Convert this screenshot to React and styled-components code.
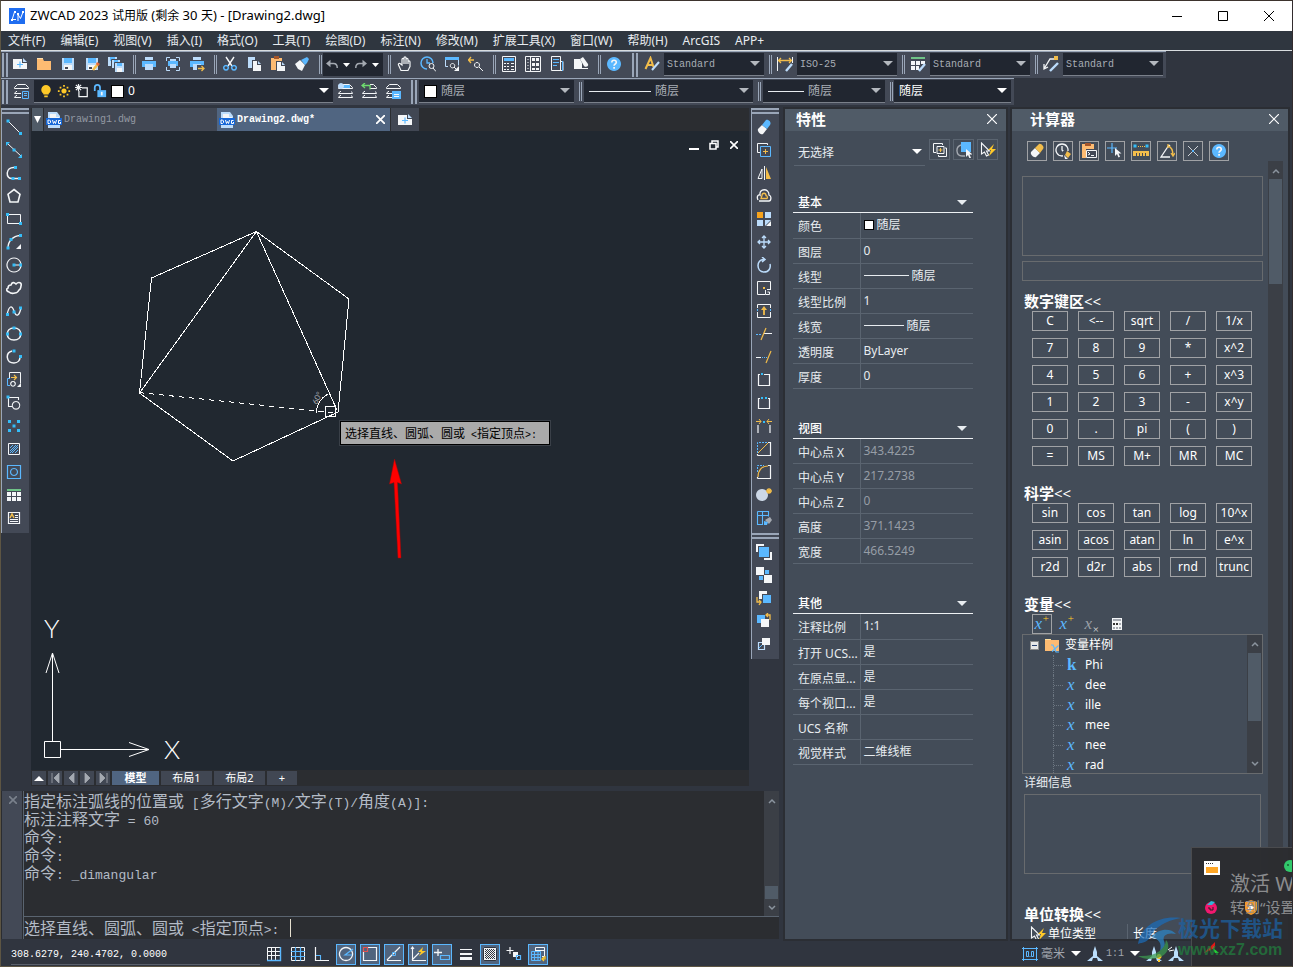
import React from 'react';
import styled, { createGlobalStyle, css } from 'styled-components';

const C = {
  bar: '#434956', frame: '#30353f', dark: '#212630', strip: '#2b2d31', canvas: '#212830',
  panel: '#434c58', head: '#505b67', grip: '#9aa6b8', line: '#5a6470', text: '#e8ecf0',
  white: '#f4f6f8', blue: '#5bb8ff', cyan: '#35bdf8', pale: '#bcdcfb', gold: '#f2bd4b', orange: '#fdbb72', grey: '#a4a9b1',
};
const ui = '"Noto Sans", "Noto Sans CJK SC", sans-serif';
const mono = '"Liberation Mono", "Noto Sans CJK SC", monospace';

const Global = createGlobalStyle`
  *, *::before, *::after { box-sizing: border-box; }
  body { margin: 0; background: ${C.frame}; font: 12px/18px ${ui}; color: ${C.text}; }
  button, input, select, textarea { font: inherit; color: inherit; margin: 0; padding: 0; border: 0; border-radius: 0; background: none; outline: none; }
  option { background: ${C.dark}; color: ${C.text}; }
  svg { display: block; flex: none; }
`;

/* ---------- icons: [colour, 'f'ill or stroke width, path] on a 16 x 16 grid ---------- */
const W = C.white, B = C.blue, Q = C.cyan, P = C.pale, G = C.gold, O = C.orange, K = C.bar, N = C.grey;
const dot = (x, y) => `M${x - 1.5} ${y - 1.5}h3v3h-3z`;
const printer = [[B, 'f', 'M1 5h14v6H1z'], [P, 'f', 'M4 1h8v3H4zM4 8h8v6H4z']];
const floppy = [[P, 'f', 'M2 2h12v12H2z'], [B, 'f', 'M4 2h8v5H4z'], [W, 'f', 'M4 9h8v5H4z'], [K, 'f', 'M5 11h3v2H5z']];
const layers = [[W, 1, 'M4.5 1.5h8l3 3v1h-14v-1zM4 8.5h-1l-1.500 2h14l-1-2M4 12.500h-1l-1.500 2h14l-1-2']];
const magnifier = [[W, 1, 'M11.500 7.500a2.500 2.500 0 1 0 0 5a2.500 2.500 0 1 0 0-5M13 12l3 3.500']];
const cursor = (x, y) => `M${x} ${y}v8l2-2 1.500 3.500 1.500-.7-1.500-3.300h3z`;

const icons = {
  zw: [['#1f6df0', 'f', 'M0 0h16v16H0z'], ['#fff', 1, 'M3 12l2.500-8M4 11.500h3M9 13V6.500l2.500 4L14 4'], ['#fff', 'f', 'M5 3h2v2H5zM2 11h2v2H2zM13 3h2v2h-2zM8 5h2v2H8z']],
  newFile: [[W, 'f', 'M1 3h9v4h5v6H1z'], [P, 'f', 'M11 2l4 4h-4z'], [B, 1.2, 'M8 5.500v6M5 8.500h6']],
  open: [['#ffe0b0', 'f', 'M1 2h6v2H1z'], [O, 'f', 'M1 3h6l1 2h7v9H1z']],
  save: floppy,
  saveAs: [...floppy, [G, 2.6, 'M9 14l5-6'], ['#e86a3a', 'f', 'M13 6l3 2-2 2-2-2z']],
  saveAll: [[P, 'f', 'M0 1h9v9H0z'], [B, 'f', 'M2 1h5v4H2z'], [K, 1, 'M3.500 3.500h9v9h-9z'], [P, 'f', 'M4 4h8v8H4z'], [B, 'f', 'M6 4h4v4H6z'], [K, 1, 'M6.500 6.500h9v9h-9z'], [P, 'f', 'M7 7h9v9H7z'], [B, 'f', 'M9 7h5v3H9z'], [W, 'f', 'M9 12h5v4H9z']],
  print: printer,
  preview: [[P, 1, 'M1.500 5V1.500H5M11 1.500h3.500V5M14.500 11v3.500H11M5 14.500H1.500V11'], [B, 'f', 'M3 5h10v5H3z'], [P, 'f', 'M5 3h6v2H5zM5 8h6v4H5z']],
  publish: [...printer, [K, 'f', 'M8 9h8v7H8z'], [G, 1.3, 'M9 12.500h6M12.500 10l2.500 2.500-2.500 2.500']],
  cut: [[W, 1.4, 'M4 1l6 9M12 1L6 10'], [B, 1.5, 'M4 9.500a2.300 2.300 0 1 0 .01 0M12 9.500a2.300 2.300 0 1 0 .01 0']],
  copy: [[P, 'f', 'M2 1h7v3H6v8H2z'], [W, 'f', 'M7 5h4v4h4v6H7z'], [P, 'f', 'M12 5l3 3h-3z']],
  paste: [[O, 'f', 'M1 2h11v12H1z'], ['#a5562a', 'f', 'M4 0h5v3H4z'], [K, 'f', 'M6 5h9v11H6z'], [W, 'f', 'M7 6h4v4h4v5H7z'], [P, 'f', 'M12 6l3 3h-3z']],
  brush: [[W, 'f', 'M1 8l5-4 5 5-3 6-4-2z'], [B, 'f', 'M7 4l2-1 4-2 2 2-2 4-2 2z']],
  undo: [[N, 2, 'M4 6h6c3 0 5 2 5 6'], [N, 'f', 'M0 6l6-5v10z']],
  redo: [[N, 2, 'M12 6H6c-3 0-5 2-5 6'], [N, 'f', 'M16 6l-6-5v10z']],
  hand: [[W, 1.2, 'M5 14.500h7l2-4V6c0-1.500-2-1.500-2 0V3.500c0-1.500-2-1.500-2 0V2c0-1.500-2-1.500-2 0v1.500c0-1.500-2-1.500-2 0V9L4 7.500C3 7 2 8 2.500 9z M8 3v5M10 3v5M12 5v3']],
  zoomRt: [[B, 1.5, 'M7 1a6 6 0 1 0 0 12M7 1a6 6 0 0 1 6 6'], [B, 1.3, 'M7 3v4h3'], ...magnifier],
  zoomWin: [[P, 1, 'M4 10.500H1.500v-9h13v8'], [B, 'f', 'M1 1h14v3H1z'], [W, 1, 'M8.500 7.500a2.200 2.200 0 1 0 .01 0M10 11l2 2'], [W, 'f', 'M15 10v5h-5z']],
  zoomPrev: [[G, 1.3, 'M0 4h6M3 1L.5 4 3 7'], [W, 1, 'M9 6.500a2.500 2.500 0 1 0 .01 0M11 11l4 4']],
  props: [[W, 1, 'M1.500.5h13v15h-13z'], [B, 'f', 'M3 2h10v3H3z'], [W, 1, 'M3 7.500h2m1 0h2m2 0h3M3 10.500h2m1 0h2m2 0h3M3 13.500h2m1 0h2m2 0h3']],
  design: [[W, 1, 'M.5.5h15v15h-15zM5.500.5v15M3 3v1m0 2v1m0 2v1m0 2v1'], [W, 'f', 'M7 2h3v3H7zM11 2h3v3h-3zM7 7h3v3H7zM11 7h3v3h-3zM7 12h3v2H7zM11 12h3v2h-3z']],
  sheet: [[W, 1, 'M2.500.5h9v14h-9zM11 5.500h3v9h-3'], [B, 1, 'M4 3.500h6M4 6.500h6M4 9.500h4M13.500 5v10']],
  clean: [[W, 'f', 'M1 3h6l2 4v6H1z'], [W, 'f', 'M7 3l3-2 5 7c1 2-2 4-4 2z'], [W, 'f', 'M1 12h14v1H1z']],
  help: [[B, 'f', 'M8 1a7 7 0 1 0 .01 0'], [W, 1.6, 'M5.800 6.500c0-3 4.500-3 4.500 0 0 1.500-2.300 1.500-2.300 3.200'], [W, 'f', 'M7.200 11h1.800v1.800H7.200z']],
  textStyle: [[G, 2, 'M1.500 13L6.500 2l3 9M3 9h6'], [P, 2, 'M8 14l7-8']],
  dimStyle: [[W, 1, 'M.5 1v14M15.500 1v6'], [G, 1.3, 'M2 4.500h12M4 2L1.500 4.500 4 7M12 2l2.500 2.500L12 7'], [P, 2.4, 'M9 15l6-7']],
  tableStyle: [['#6fc387', 'f', 'M1 1h14v2H1z'], [W, 'f', 'M1 5h4v4H1zM6 5h4v4H6zM11 5h4v3h-4zM1 10h4v4H1zM6 10h3v4H6z'], [P, 2.4, 'M9 15l6-7']],
  leader: [[W, 1.3, 'M12 3H7L1.500 12M1 8v5l4-2'], [G, 'f', 'M11 0h4v4h-4z'], [P, 2.4, 'M7 15l8-8']],
  layerProps: [...layers, [K, 'f', 'M8 7h8v9H8z'], [B, 1, 'M9.500 8.500h6v7h-6zM11 10.500h3M11 12.500h3']],
  layerPrev: [['#5bb8ff', 'f', 'M3 2h10v3H3z'], ...layers, [P, 'f', 'M4 0a3 3 0 1 0 .01 0']],
  layerBack: [...layers, [K, 'f', 'M0 0h9v6H0z'], ['#6fdc6f', 1.3, 'M1 2.500h8v4M4 0L1 2.500 4 5']],
  layerState: [...layers, [K, 'f', 'M7 7h9v9H7z'], [B, 'f', 'M7 8h9v8H7z'], [W, 1, 'M9 11.500h5M9 13.500h5']],
  bulb: [['#ffc928', 'f', 'M8 1a5.500 5.500 0 0 0-3 10v1h6v-1A5.500 5.500 0 0 0 8 1M6 13h4v2H6z']],
  sun: [['#ffc928', 'f', 'M8 5a3 3 0 1 0 .01 0M7 1h2v2H7zM7 13h2v2H7zM1 7h2v2H1zM13 7h2v2h-2zM3 3h2v2H3zM11 3h2v2h-2zM3 11h2v2H3zM11 11h2v2h-2z']],
  vpFreeze: [[W, 1.4, 'M8 4.500h6v10H4.500V8M0 4h8M4 0v8M1 1l6 6M7 1L1 7']],
  unlock: [[B, 2, 'M2 8V4c0-4 6-4 6 0v3'], [B, 'f', 'M5 7h10v8H5z'], [W, 'f', 'M9 9h2v4H9z']],
  dwg: [[P, 'f', 'M2 0h9l3 4v12H2z'], [W, 'f', 'M4 2h6v3h3v3H4z'], ['#1768d8', 'f', 'M0 6h16v7H0z'], ['#fff', 1, 'M2 8v3.500h1.500l1-1V9l-1-1zM6.500 8l1 3.500 1-2 1 2 1-3.500M14.500 8.500h-2v3h2v-1.500']],
  line: [[W, 1, 'M2 2l12 12'], [Q, 'f', dot(2, 2) + dot(14.5, 14.5)]],
  xline: [[W, 1, 'M2 2l13 12'], [Q, 'f', dot(8, 8) + 'M0 0h4L0 4zM16 16h-4l4-4z']],
  polyline: [[W, 1.5, 'M9 2.500C-1 1-1 15 7 13.500h6'], [Q, 'f', dot(9.5, 2.5) + dot(7, 13.5) + dot(13.5, 13.5)]],
  polygon: [[W, 1.6, 'M8 1.500l6 4.700-2 7.800H4L2 6.200z']],
  rect: [[W, 1, 'M1.500 3.500h13v9h-13z'], [Q, 'f', dot(1.5, 3.5) + dot(14.5, 12.5)]],
  arc: [[W, 1.4, 'M2 14C2 7 7 2 14 1.500'], [Q, 'f', dot(2, 14) + dot(5, 5.5) + dot(14.5, 1.5)], [W, 'f', 'M15 10v5h-5z']],
  circle: [[W, 1.2, 'M8 1a7 7 0 1 0 .01 0M8 8h6'], [Q, 'f', dot(8, 8) + dot(14.5, 8)]],
  cloud: [[W, 1.6, 'M5 5c1-3 3-3 5-1 3-3 6-1 5 2-.5 2 0 3-2 4-1 2-2 3-4 3-4 1-5 0-6-1-3-1-3-3-1-4 0-2 1-3 3-3z']],
  spline: [[W, 1.3, 'M1 12C3 2 6 2 8 8s5 6 7-3'], [Q, 'f', dot(1.5, 11.5) + dot(8, 9) + dot(14.5, 5)]],
  ellipse: [[W, 1.5, 'M8 2C-1 2-1 14 8 14S17 2 8 2'], [Q, 'f', dot(8, 2) + dot(1.5, 8) + dot(14.5, 8)]],
  ellArc: [[W, 1.5, 'M6 2C-1 4 0 14 8 14c4 0 6-3 6-6'], [Q, 'f', dot(8, 2) + dot(14.5, 7.5)]],
  insert: [[W, 1, 'M3.500 6V.5h11v11'], [B, 1, 'M4 6.500H1.500v7H4'], [G, 1.2, 'M5 5.500h5M8 3l2.500 2.500L8 8'], [W, 1.2, 'M7 9.500a2.300 2.300 0 1 0 .01 0'], [W, 'f', 'M15 11v4h-4z']],
  block: [[W, 1.1, 'M6 11.500H2.500v-9h10V5M10 6.500a3.800 3.800 0 1 0 .01 0'], [Q, 'f', dot(2, 2)]],
  points: [[Q, 'f', dot(3.5, 3.5) + dot(12.5, 3.5) + dot(8, 8) + dot(3.5, 12.5) + dot(12.5, 12.5)]],
  hatch: [[W, 1, 'M2.500 2.500h11v11h-11z'], [B, 1, 'M4 7l3-3M4 10l6-6M4 12l8-8M6 12l6-6M9 12l3-3']],
  region: [[B, 1.2, 'M1.500 1.500h13v13h-13zM8 4.500a3.500 3.500 0 1 0 .01 0']],
  table: [['#6fc387', 'f', 'M1 2h14v2H1z'], [W, 'f', 'M1 5h4v4H1zM6 5h4v4H6zM11 5h4v4h-4zM1 10h4v4H1zM6 10h4v4H6zM11 10h4v4h-4z']],
  mtext: [[W, 1.2, 'M2.500 2.500h11v11h-11z'], [G, 1.5, 'M4 8l2-4 2 4'], [W, 1, 'M9 5.500h3M9 7.500h3M4 9.500h8M4 11.500h8']],
  eraser: [[W, 'f', 'M2 10l4-4 5 4-4 5c-2 1-6-2-5-5z'], [B, 'f', 'M6 6l4-5c2-1 6 2 4 5l-3 4z']],
  eraserGold: [[W, 'f', 'M2 9l4-4 5 5-4 4c-2 1-6-2-5-5z'], [G, 'f', 'M6 5l4-4c2-1 6 3 4 5l-3 4z']],
  copyObj: [[W, 1, 'M4 10.500H1.500v-9h10V3'], [B, 1, 'M4.500 4.500h10v10h-10z'], [G, 1, 'M9.500 7v5M7 9.500h5']],
  mirror: [[W, 1, 'M8.500 1v14M6 4v9.500H2z'], [G, 'f', 'M10 2l5 12h-5z']],
  offset: [[W, 1.3, 'M2 12c-2-4 1-6 2-5-1-7 9-7 9 0 3 1 2 6 0 6H3'], [G, 1.3, 'M5 10.500h6c1-1 0-3-1-3 0-3-4-3-4 0z']],
  array: [['#f7a31c', 'f', 'M1 1h6v6H1z'], [P, 'f', 'M9 1h6v6H9zM1 9h6v6H1z'], [P, 'f', 'M9 9h6L9 15z'], [W, 'f', 'M15 10v5h-5z']],
  move: [[P, 1.3, 'M8 2v12M2 8h12M6 4l2-2 2 2M6 12l2 2 2-2M4 6L2 8l2 2M12 6l2 2-2 2']],
  rotate: [[P, 1.5, 'M8 2.500C0 2 0 15 8 15c5 0 7-4 6-8M6 0l3 2.500L6 5']],
  scale: [[W, 1, 'M9 14.500H1.500v-13h13V9M9.500 10v4.500h4V12h-2M11 9.500h4'], [G, 'f', 'M7 7h2v2H7z']],
  stretch: [[W, 1, 'M1.500 5V1.500h13V5M1.500 9v5.500h13V9'], [G, 1.8, 'M8 12V5'], [G, 'f', 'M8 3l3 4H5z'], [B, 'f', 'M1 6h1v2H1zM14 6h1v2h-1z']],
  trim: [[B, 1, 'M0 8.500h2m1 0h2'], [W, 1, 'M8 7.500h8'], [G, 1.2, 'M5 14l5-12']],
  extend: [[W, 1, 'M0 8.500h5'], [B, 1, 'M6 8.500h1m1 0h1m1 0h1'], [G, 1.2, 'M10 14l5-12']],
  breakPt: [[W, 1.2, 'M4 2.500H2.500v11h11v-11H8'], [Q, 'f', 'M5 1h2v2H5z']],
  breakTwo: [[W, 1.2, 'M4 3.500H2.500v10h11v-10H12'], [Q, 'f', 'M5 2h2v2H5zM9 2h2v2H9z']],
  join: [[W, 1.2, 'M2 15V7M14 15V7'], [G, 1, 'M0 3.500h5M3 1l2 2.500L3 6M16 3.500h-5M13 1l-2 2.500L13 6'], [Q, 'f', 'M7 3h2v2H7z']],
  chamfer: [[W, 1.2, 'M1.500 14.500h13v-13H12M1.500 14.500V13'], [B, 1, 'M1.500 12V1.500H12', '2 1'], [G, 1, 'M2 12L12 2']],
  fillet: [[W, 1.2, 'M1.500 14.500h13v-13H12M1.500 14.500V13'], [B, 1, 'M1.500 8V1.500H8', '2 1'], [G, 1.2, 'M2 13C2 6 6 2 12 2']],
  explode: [['#ccd7e6', 'f', 'M6 2a6 6 0 1 0 .01 0'], [G, 1.3, 'M13 1v6M10 4h6M11 2l4 4M15 2l-4 4']],
  edit: [[B, 1.1, 'M1.500 1.500h11v5M1.500 1.500v13h5v-13M1 5.500h11'], [N, 'f', 'M9 10l5-3 2 3-3 4z'], [B, 'f', 'M8 11l4 1-1 3H8z']],
  front: [[W, 'f', 'M0 0h8v2H2v6H0zM16 8v8H8v-2h6V8z'], [B, 'f', 'M3 3h10v10H3z']],
  back: [[W, 'f', 'M0 0h8v8H0zM8 8h8v8H8z'], [B, 'f', 'M9 3h4v4H9zM3 9h4v4H3z']],
  above: [[W, 'f', 'M3 1h8v3H6v5H3z'], [B, 'f', 'M7 5h8v8H7z'], [G, 1.3, 'M1 7v5h4M3 10l2 2-2 3']],
  below: [[B, 'f', 'M1 2h8v8H1z'], [W, 'f', 'M5 6h8v8H5z'], [G, 1.3, 'M14 7V2h-4M12 0l-2 2 2 2']],
  hatchBack: [[P, 1.2, 'M2.500 6.500h6v7h-6z'], [B, 1, 'M3 12l5-5'], [W, 'f', 'M6 2h8v7H6z']],
  pickAdd: [[W, 1, 'M4 10.500H1.500v-9h9V3M5 4.500h7v7H5zM13 6h1.500v8.500h-8V13'], [G, 1, 'M8.500 6v4M6.500 8h4']],
  select: [[N, 1.4, 'M5 3c-6 2-5 11 1 11h3'], [B, 'f', 'M5 0h10v10H5z'], [W, 'f', cursor(10, 7)]],
  quick: [[W, 1.1, 'M1.500 1v11l3-2 2 4 2-1-2-4h3z'], ['#ffc928', 'f', 'M14 2L8 8h3l-2 6 7-7h-4z']],
  history: [[W, 1.3, 'M7 1a6 6 0 1 0 .01 0M7 3v4l2 2'], [K, 'f', 'M8 8h8v8H8z'], [W, 'f', 'M9 12l4 4-3 0z'], [G, 'f', 'M12 8l4 3-3 4-3-3z']],
  pasteCmd: [[O, 'f', 'M1 1h12v14H1z'], ['#a5562a', 'f', 'M4 0h6v3H4z'], [K, 'f', 'M5 6h11v9H5z'], [W, 1, 'M5.500 7.500h10v7h-10zM7 9l2 2-2 1M10 12.500h3']],
  getPoint: [[B, 1.2, 'M5 0v10M0 5h10'], [W, 'f', cursor(8, 5)]],
  distance: [[Q, 'f', dot(2, 3) + dot(14, 3)], [G, 1, 'M5 3.500h1m1 0h1m1 0h1m1 0h1'], [G, 'f', 'M0 8h16v5H0z'], [K, 1, 'M3.500 10v3M6.500 10v3M9.500 10v3M12.500 10v3']],
  angle: [[W, 1.3, 'M10 2L2 14h9M10 2l1 1'], [G, 1.3, 'M9 3c4 1 5 4 5 10M12 10l2 3 2-3M9 1v4']],
  intersect: [[W, .8, 'M3 3l10 10M13 3L3 13'], [B, 'f', 'M7 7h2v2H7z']],
  calcVar: [[W, 'f', 'M3 2h10v12H3z'], [N, 'f', 'M4 3h8v2H4z'], ['#333', 'f', 'M4 7h2v2H4zM7 7h2v2H7z'], [N, 'f', 'M10 7h2v2h-2zM4 11h2v2H4zM7 11h2v2H7zM10 11h2v2h-2z']],
  folder: [['#ffe0a0', 'f', 'M1 2h6v2H1z'], [O, 'f', 'M1 3h14v11H1z'], [B, 1.2, 'M7 8h2l3 7h3M14.500 8.500L8 14.500']],
  gridA: [[W, 1, 'M1.500 1.500h13v13h-13zM5.500 1v13M9.500 1v13M1 5.500h13M1 9.500h13'], [B, 1.4, 'M14.500 1v13.500H1']],
  gridB: [[W, 1, 'M1.500 1.500h13v13h-13z'], [B, 1.2, 'M5.500 1v14M10.500 1v14M1 5.500h14M1 10.500h14']],
  ortho: [[W, 1.2, 'M1.500 1v13.500H15'], [B, 1.1, 'M2 9.500h4.500V14']],
  polar: [[W, 1.3, 'M8 1.500a6.500 6.500 0 1 0 .01 0'], [B, 1.2, 'M15 3L7 9h7']],
  osnap: [[W, 1.2, 'M6 1.500h8.500v13h-13V6'], ['#e35353', 1.2, 'M1.500 1.500h4v4h-4z']],
  otrack: [[W, 1.2, 'M1 14.500h14M1 14L14 1'], [B, 1, 'M6.500 6.500h3v3h-3z']],
  ducs: [[W, 1.1, 'M2.500 1v13.500H16M1 3l1.500-2L4 3M2 14L9 7'], ['#ffc928', 'f', 'M13 1L8 6h3l-2 4 7-5h-4z']],
  dyn: [[W, 1.3, 'M4 3v7M0 6.500h8'], [B, 1.2, 'M6.500 9.500h9v4h-9z']],
  lwt: [[W, 'f', 'M2 3h12v1H2zM2 7h12v2H2zM2 11h12v3H2z']],
  transp: [['#f0f2f4', 'f', 'M2 2h12v12H2z'], ['#30353f', 1, 'M3 3.500h10M3 5.500h10M3 7.500h10M3 9.500h10M3 11.500h10M4 4.500h9M4 6.500h9M4 8.500h9M4 10.500h9M4 12.500h9', '1 1'], ['#30353f', 1, 'M1.500 2.500l1-1h11l1 1v11l-1 1h-11l-1-1z']],
  cycle: [[W, 1.2, 'M4 1v7M.5 4.500h7'], [W, 'f', 'M7 6h5v5H7z'], [B, 1.2, 'M10.500 9.500h4v4h-4z']],
  annot: [[W, 1, 'M5.500 5V1.500h9v9H12M5 4.500h9'], [B, 1, 'M1.500 5.500h9v9h-9zM4.500 5v10M8 5v10M1 8.500h10M1 11.500h10'], ['#ffc928', 1.2, 'M15 10v3h-3M14 11l-2 2 2 2']],
  units: [[B, 1, 'M1.500 1v14M0 2.500h16M14.500 1v14M0 13.500h16'], [B, 1, 'M4.500 5.500v5h2v-5zM9.500 5.500v5h2v-5z'], [B, 'f', 'M7.500 10h1v1h-1z']],
  scaleA: [['#b9ddfb', 'f', 'M8 0l2 6v4l6 5H11l-1-3H6l-1 3H0l6-5V6z']],
};
icons.scaleB = [...icons.scaleA, ['#ffc928', 'f', 'M13 8a2.500 2.500 0 1 0 .01 0M12 14h2v2h-2z']];
icons.scaleC = [...icons.scaleA, [W, 1, 'M0 4l4-3M1 5l5-1']];

const Icon = ({ name, size = 16 }) => (
  <svg width={size} height={size} viewBox="0 0 16 16" aria-hidden="true">
    {icons[name].map(([c, w, d, dash], i) => w === 'f'
      ? <path key={i} d={d} fill={c} />
      : <path key={i} d={d} fill="none" stroke={c} strokeWidth={w} strokeDasharray={dash} />)}
  </svg>
);
const Caret = ({ color = N, up }) => (
  <svg width="10" height="6" viewBox="0 0 10 6" aria-hidden="true"><path d={up ? 'M0 6l5-5 5 5z' : 'M0 0h10L5 5z'} fill={color} /></svg>
);
const Chevron = ({ up }) => (
  <svg width="8" height="6" viewBox="0 0 8 6" aria-hidden="true"><path d={up ? 'M1 5l3-3 3 3' : 'M1 1l3 3 3-3'} fill="none" stroke="#8b949e" strokeWidth="1.500" /></svg>
);
const Cross = ({ size = 10, color = '#fff', w = 1.2 }) => (
  <svg width={size} height={size} viewBox="0 0 10 10" aria-hidden="true"><path d="M0 0l10 10M10 0L0 10" stroke={color} strokeWidth={w} /></svg>
);

/* ---------- window frame ---------- */
const Window = styled.div`
  position: relative; height: 100vh; display: flex; flex-direction: column; overflow: hidden; background: ${C.frame};
  border: 1px solid #5d5543; border-top-color: #3d332d; border-right-color: #332c2e;
`;
const TitleBar = styled.header`
  display: flex; align-items: center; height: 30px; flex: none; padding: 0 17px 0 8px; gap: 5px; background: #fff; color: #000;
  h1 { flex: 1; margin: 0; font-size: 12px; font-weight: 400; }
`;
const WinButton = styled.button`
  display: grid; place-items: center; width: 12px; height: 20px; margin-left: 29px;
`;
const MenuBar = styled.nav`
  display: flex; gap: 15px; height: 20px; flex: none; padding-left: 7px; background: #2f363f; border-bottom: 1px solid #d9dde0;
`;
const MenuItem = styled.button`line-height: 18px; white-space: nowrap;`;

/* ---------- horizontal toolbars ---------- */
const Toolbar = styled.div`
  display: flex; align-items: flex-start; align-self: flex-start; height: 27px; flex: none; padding-right: 3px;
  background: ${C.bar}; border-top: 1px solid ${C.grip};
`;
const Grip = styled.span`
  flex: none; width: ${p => (p.$start ? 7 : 14)}px; padding: 1px 0 0 ${p => (p.$start ? 1 : 6)}px;
  &::before { content: ''; display: block; width: 6px; height: 24px; border: solid ${C.grip}; border-width: 0 2px; }
`;
const Separator = styled.span`
  flex: none; width: 9px; padding: 3px 0 0 5px;
  &::before { content: ''; display: block; width: 3px; height: 19px; border: solid ${C.grip}; border-width: 0 1px; }
`;
const ToolButton = styled.button`display: grid; place-items: center; flex: none; width: ${p => p.$w || 24}px; height: 24px;`;
const HistoryBox = styled.div`
  display: flex; align-items: center; gap: 5px; width: 60px; height: 23px; margin-top: 1px; padding: 0 2px 0 3px; background: ${C.dark};
`;
const HistoryButton = styled.button`display: grid; place-items: center;`;
const Combo = styled.label`
  display: flex; align-items: center; gap: 4px; width: ${p => p.$w}px; height: 23px; margin: 1px 0 0 ${p => p.$gap || 0}px; padding: 0 4px 0 ${p => p.$pad || 3}px;
  background: ${C.dark}; border-bottom: 1px solid #7a808a; color: ${p => (p.$bright ? '#fff' : '#a8adb5')};
  select { flex: 1; min-width: 0; height: 20px; padding-top: ${p => (p.$mono ? 2 : 0)}px; appearance: none; font-family: ${p => (p.$mono ? mono : ui)}; font-size: ${p => (p.$mono ? 10 : 12)}px; }
`;
const Swatch = styled.span`flex: none; width: ${p => p.$s || 13}px; height: ${p => p.$s || 13}px; background: #fff; border: 1px solid #000;`;
const Stroke = styled.span`flex: none; width: ${p => p.$w}px; height: 1px; background: #e8ecf0;`;

/* ---------- workspace ---------- */
const Main = styled.main`display: flex; flex: 1; min-height: 0; padding: 3px 4px 0 0; gap: 6px;`;
const Workspace = styled.div`display: flex; flex-direction: column; flex: 1; min-width: 0; gap: 5px;`;
const Upper = styled.div`display: flex; flex: 1; min-height: 0; gap: 2px;`;
const SideBar = styled.div`flex: none; width: 28px; align-self: flex-start; background: ${C.bar}; border-left: 1px solid ${C.grip};`;
const SideGroup = styled.div`padding-bottom: 4px;`;
const SideGrip = styled.div`height: 6px; margin-bottom: 1px; border: solid ${C.grip}; border-width: 2px 0;`;
const SideButton = styled.button`display: grid; place-items: center; width: 24px; height: 23px; padding-right: 1px;`;
const Document = styled.section`display: flex; flex-direction: column; flex: 1; min-width: 0;`;
const TabStrip = styled.div`display: flex; flex: none; gap: ${p => (p.$low ? 2 : 0)}px; height: ${p => (p.$low ? 16 : 23)}px; padding: ${p => (p.$low ? '1px 0 1px 1px' : '0 0 0 1px')}; background: ${C.strip};`;
const TabList = styled.button`display: grid; place-items: center; width: 11px; margin-right: 1px; background: ${C.head};`;
const DocTab = styled.div`
  display: flex; align-items: center; gap: 2px; width: 173px; padding: 0 5px 0 2px; background: ${p => (p.$on ? '#506581' : '#414753')};
  > button:first-child { display: flex; align-items: center; gap: 2px; flex: 1; font: ${p => (p.$on ? 700 : 400)} 10px ${mono}; color: ${p => (p.$on ? '#fff' : '#9298a2')}; }
`;
const NewTab = styled.button`display: grid; place-items: center; width: 28px; margin-left: 1px; background: #414753;`;
const LayoutTab = styled.button`
  display: grid; place-items: center; width: ${p => p.$w}px; line-height: 14px; font-size: 11px; background: ${p => (p.$on ? '#506581' : '#414753')}; font-weight: ${p => (p.$on ? 700 : 400)}; color: #fff;
`;
const Canvas = styled.div`
  position: relative; flex: 1; min-height: 0; overflow: hidden; background: ${C.canvas};
  > svg { position: absolute; left: 0; }
`;
const DocControls = styled.div`position: absolute; top: 8px; right: 10px; display: flex; align-items: center; gap: 10px; button { display: grid; place-items: center; width: 10px; height: 12px; }`;
const Prompt = styled.div`
  position: absolute; left: 309px; top: 290px; height: 24px; padding: 0 12px 0 4px; background: #aaa; border: 1px solid #000; outline: 1px solid #3a4048;
  color: #000; font: 12px/24px ${ui}; white-space: pre;
`;
const Latin = styled.span`font-family: ${p => (p.$ui ? ui : mono)}; font-size: ${p => p.$s}px; line-height: 1;`;

const CommandPanel = styled.section`display: flex; flex: none; height: 148px; padding-left: 1px; background: ${C.strip};`;
const CommandGrip = styled.div`flex: none; width: 20px; padding: 5px 0 0 7px; background: ${C.bar};`;
const CommandBody = styled.div`flex: 1; display: flex; flex-direction: column; min-width: 0; border-left: 1px solid ${C.line}; margin-left: 1px; color: #b3bbc6; font: 16px/18px "Noto Sans CJK SC", sans-serif;`;
const CommandLog = styled.div`display: flex; flex: 1; p { margin: 0; height: 18px; white-space: pre; } > div:first-child { flex: 1; }`;
const CommandInput = styled.div`display: flex; align-items: center; height: 23px; border-top: 1px solid ${C.line}; label { height: 20px; white-space: pre; } input { flex: 1; height: 18px; margin-left: 11px; border-left: 1px solid #e6e0d0; }`;
const Scroll = styled.div`display: flex; flex-direction: column; justify-content: space-between; align-items: center; flex: none; width: 15px; padding: ${p => p.$pad || '6px 0'}; background: #3b3f46;`;
const Thumb = styled.span`width: 13px; height: ${p => p.$h}px; margin: ${p => p.$m}; background: ${C.head};`;

/* ---------- docked panels ---------- */
const Panel = styled.aside`display: flex; flex-direction: column; flex: none; width: ${p => p.$w}px; margin-top: 1px; background: ${C.panel}; box-shadow: 0 0 0 2px #2b2e34; overflow: hidden;`;
const PanelHead = styled.header`
  display: flex; align-items: center; justify-content: space-between; flex: none; height: 22px; padding: 0 9px 2px ${p => p.$l}px; background: ${C.head};
  h2 { margin: 0; font-size: 15px; color: #fff; } button { display: grid; place-items: center; width: 10px; height: 20px; }
`;
const Selector = styled.div`display: flex; align-items: flex-start; gap: 3px; flex: none; height: 35px; padding: 8px 8px 0 9px;`;
const SelectBox = styled.label`
  display: flex; align-items: center; flex: 1; height: 27px; padding: 0 3px 0 4px; margin-right: 1px; border-bottom: 1px solid ${C.line};
  select { appearance: none; flex: 1; min-width: 0; height: 24px; padding-top: 2px; }
`;
const FlatButton = styled.button`display: grid; place-items: center; width: 21px; height: 21px; border: 1px solid ${C.line};`;
const Sections = styled.div`display: flex; flex-direction: column; gap: 25px; padding: 22px 33px 0 8px;`;
const PropTable = styled.table`
  width: 100%; border-collapse: collapse; table-layout: fixed; text-align: left;
  caption { height: 25px; padding: 6px 6px 0 5px; border-bottom: 1px solid #eef1f4; font-weight: 500; color: #fff; text-align: left; }
  caption span { display: flex; align-items: center; justify-content: space-between; line-height: 18px; }
  th { width: 67px; padding: 4px 0 0 5px; border-right: 1px solid ${C.line}; font-weight: 400; }
  td { padding: 0 0 0 3px; } th, td { height: 25px; border-bottom: 1px solid ${C.line}; line-height: 18px; white-space: nowrap; }
`;
const Value = styled.span`display: flex; align-items: center; gap: 3px; color: ${p => (p.$dim ? '#969da6' : C.text)};`;

const CalcTools = styled.div`display: flex; gap: 6px; flex: none; padding: 10px 0 0 15px;`;
const calcBox = css`border: 1px solid #686b6e;`;
const BoxButton = styled.button`display: grid; place-items: center; width: 20px; height: 20px; border: 1px solid ${p => (p.$plain ? 'transparent' : '#a0a2a5')};`;
const CalcScroll = styled.div`display: flex; flex: 1; min-height: 0; padding-right: 5px;`;
const CalcBody = styled.div`flex: 1; min-width: 0; padding: 15px 5px 0 10px; overflow: hidden;`;
const TextArea = styled.textarea`&& { display: block; resize: none; height: 80px; ${calcBox} width: ${p => (p.$inset ? 'calc(100% - 4px)' : '100%')}; margin-left: ${p => (p.$inset ? 2 : 0)}px; }`;
const Entry = styled.input`&& { display: block; width: 100%; height: 20px; margin-top: 5px; ${calcBox} }`;
const Caption = styled.h3`margin: ${p => p.$top || 17}px 0 0 2px; height: 20px; font-size: 15px; line-height: 20px; color: #fff; span { font-weight: 400; }`;
const Keypad = styled.div`display: grid; grid-template-columns: repeat(5, 36px); gap: 7px 10px; padding-left: 10px;`;
const Key = styled.button`height: 20px; border: 1px solid #a0a2a5; line-height: 16px; color: #fff;`;
const VarTools = styled.div`display: flex; gap: 5px; padding-left: 10px;`;
const VarSign = styled.i`min-width: 12px; font: ${p => (p.$key ? '700' : 'italic 400')} 17px/16px "Liberation Serif", serif; color: ${p => p.$c || B}; sup, sub { font-size: 11px; line-height: 0; color: ${p => (p.$c ? '#ddd' : '#ffc928')}; }`;
const Tree = styled.div`display: flex; height: 140px; ${calcBox} > ul { flex: 1; }`;
const TreeList = styled.ul`margin: 0; padding: 0; list-style: none; overflow: hidden;`;
const TreeRow = styled.li`
  display: flex; align-items: center; height: 20px; gap: ${p => (p.$root ? 5 : 6)}px; padding-left: ${p => (p.$root ? 7 : 30)}px; color: #fff;
  &::before {
    content: ''; display: ${p => (p.$root ? 'none' : 'block')}; width: 11px; height: 20px; margin-right: -3px; border-left: 1px dotted #6c7681;
    background: repeating-linear-gradient(90deg, #6c7681 0 1px, transparent 1px 2px) 0 10px / 11px 1px no-repeat;
  }
`;
const Expander = styled.button`&& { width: 9px; height: 9px; background: #e8e8e8; border: 1px solid #8c8c8c; display: grid; place-items: center; } &::before { content: ''; width: 5px; height: 1px; background: #27406e; }`;
const FieldLabel = styled.label`display: block; height: 20px; padding-left: 2px; line-height: 18px;`;
const UnitRow = styled.div`display: grid; grid-template-columns: 97px 1fr; height: 20px; padding-left: 8px; color: #fff; span { display: flex; align-items: center; gap: 2px; } span + span { padding-left: 5px; border-left: 1px solid ${C.line}; }`;

/* ---------- status bar and tray ---------- */
const StatusBar = styled.footer`display: flex; align-items: center; flex: none; height: 27px; padding: 3px 108px 0 10px;`;
const Coords = styled.output`width: 249px; height: 21px; margin-right: 4px; border-bottom: 1px solid #5a606b; font: 10px/21px ${mono}; color: #fff; white-space: pre;`;
const Toggle = styled.button`display: grid; place-items: center; width: 20px; height: 21px; margin-right: 4px; border: 1px solid ${p => (p.$on ? B : 'transparent')}; background: ${p => (p.$on ? '#50647e' : 'none')};`;
const StatusRight = styled.div`display: flex; align-items: center; gap: 6px; margin-left: auto; color: #a0a5ad; button { display: flex; align-items: center; gap: 3px; }`;
const Tray = styled.div`position: absolute; right: -1px; bottom: -1px; width: 102px; height: 120px; background: rgba(43, 44, 47, 0.97); border: solid #4a4b4e; border-width: 1px 0 0 1px; > svg { width: 101px; height: 119px; }`;
const Notice = styled.div`position: absolute; left: 38px; top: 22px; width: 63px; overflow: hidden; white-space: nowrap; color: #8b8c8e; font-size: 20px; line-height: 28px; p { margin: 0; } p + p { font-size: 15px; line-height: 18px; }`;
const Watermark = styled.div`
  position: absolute; right: 9px; bottom: 4px; display: flex; align-items: center; opacity: .72; pointer-events: none; white-space: nowrap;
  svg { margin-right: -9px; }
  strong { display: block; font-size: 21px; line-height: 24px; color: #1c62a5; } em { display: block; font: 700 16px/20px "Liberation Sans", sans-serif; color: #22803f; }
`;

/* Latin runs take their own face and size, Chinese runs the full-width one */
const Mixed = ({ children, s = 13, ui: plain }) => children.split(/([\x20-\x7e]+)/).map((t, i) => (i % 2 ? <Latin key={i} $s={s} $ui={plain}>{t}</Latin> : t));

const menus = ['文件(F)', '编辑(E)', '视图(V)', '插入(I)', '格式(O)', '工具(T)', '绘图(D)', '标注(N)', '修改(M)', '扩展工具(X)', '窗口(W)', '帮助(H)', 'ArcGIS', 'APP+'];
const groups = [['newFile', 'open', 'save', 'saveAs', 'saveAll'], ['print', 'preview', 'publish'], ['cut', 'copy', 'paste', 'brush']];
const groups2 = [['hand', 'zoomRt', 'zoomWin', 'zoomPrev'], ['props', 'design', 'sheet', 'clean'], ['help']];
const styles = [['textStyle', 'Standard', 0], ['dimStyle', 'ISO-25', 1], ['tableStyle', 'Standard', 1], ['leader', 'Standard', 1]];
const drawTools = ['line', 'xline', 'polyline', 'polygon', 'rect', 'arc', 'circle', 'cloud', 'spline', 'ellipse', 'ellArc', 'insert', 'block', 'points', 'hatch', 'region', 'table', 'mtext'];
const modifyTools = ['eraser', 'copyObj', 'mirror', 'offset', 'array', 'move', 'rotate', 'scale', 'stretch', 'trim', 'extend', 'breakPt', 'breakTwo', 'join', 'chamfer', 'fillet', 'explode', 'edit'];
const orderTools = ['front', 'back', 'above', 'below', 'hatchBack'];
const properties = [
  ['基本', [['颜色', <><Swatch $s={10} />随层</>], ['图层', '0'], ['线型', <><Stroke $w={45} />随层</>], ['线型比例', '1'], ['线宽', <><Stroke $w={40} />随层</>], ['透明度', 'ByLayer'], ['厚度', '0']]],
  ['视图', [['中心点 X', '343.4225'], ['中心点 Y', '217.2738'], ['中心点 Z', '0'], ['高度', '371.1423'], ['宽度', '466.5249']], true],
  ['其他', [['注释比例', '1:1'], ['打开 UCS...', '是'], ['在原点显...', '是'], ['每个视口...', '是'], ['UCS 名称', ''], ['视觉样式', '二维线框']]],
];
const numKeys = 'C <-- sqrt / 1/x 7 8 9 * x^2 4 5 6 + x^3 1 2 3 - x^y 0 . pi ( ) = MS M+ MR MC'.split(' ');
const sciKeys = 'sin cos tan log 10^x asin acos atan ln e^x r2d d2r abs rnd trunc'.split(' ');
const toggles = [['gridA'], ['gridB'], ['ortho'], ['polar', 1], ['osnap', 1], ['otrack', 1], ['ducs', 1], ['dyn', 1], ['lwt'], ['transp', 1], ['cycle'], ['annot', 1]];
const log = ['指定标注弧线的位置或 [多行文字(M)/文字(T)/角度(A)]:', '标注注释文字 = 60', '命令:', '命令:', '命令: _dimangular'];

const ToolGroup = ({ names }) => names.map(n => <ToolButton key={n} aria-label={n}><Icon name={n} /></ToolButton>);
const ComboBox = ({ name, value, children, ...rest }) => (
  <Combo {...rest}>{children}<select aria-label={name}><option>{value}</option></select><Caret color={rest.$bright ? '#fff' : '#b4b8be'} /></Combo>
);
const SideTools = ({ names }) => (
  <SideGroup><SideGrip />{names.map(n => <SideButton key={n} aria-label={n}><Icon name={n} /></SideButton>)}</SideGroup>
);

const Drawing = () => (
  <svg width="719" height="640" viewBox="31 131 719 640" style={{ top: 0 }} fill="none" stroke="#fff" aria-label="图形">
    <g shapeRendering="crispEdges">
      <path d="M256.400 231.500L349 299L338 412L233 461L139.500 393L151.500 278ZM139.500 393L256.400 231.500L337 410" />
      <path d="M139.500 392.600L337 413" strokeDasharray="5 5" />
      <path d="M328 394Q317 400 316 413" />
      <path d="M325.500 406.500h10v10h-10z" />
    </g>
    <text x="0" y="0" transform="translate(317 405) rotate(-65)" fontSize="8" fill="#a8abb0" stroke="none" fontFamily="Lato">60°</text>
    <path d="M394.500 459L389.500 484L394 482.500L398 558H401L397.500 482.500L401.500 484Z" fill="#f00" stroke="#a30808" strokeWidth=".5" />
  </svg>
);
const Axes = () => (
  <svg width="160" height="160" viewBox="31 610 160 160" style={{ bottom: 0 }} fill="none" stroke="#fff" aria-label="UCS">
    <path d="M44.500 741.500h16v16h-16zM52.500 741V654M46 673L52.500 653L59 673M61 749.500H149M129 742.500L149 749.500L129 756.500" />
    <g fill="#fff" stroke="none" fontFamily="Lato, sans-serif" fontWeight="300" fontSize="26">
      <text x="44" y="638">Y</text><text x="164" y="759">X</text>
    </g>
  </svg>
);

export default function App() {
  return (
    <Window>
      <Global />
      <TitleBar>
        <Icon name="zw" /><h1><Mixed s={13} ui>ZWCAD 2023 试用版 (剩余 30 天) - [Drawing2.dwg]</Mixed></h1>
        <WinButton aria-label="最小化"><svg width="10" height="10"><path d="M0 5.500h10" stroke="#000" /></svg></WinButton>
        <WinButton aria-label="最大化"><svg width="10" height="10"><path d="M.5.5h9v9h-9z" stroke="#000" fill="none" /></svg></WinButton>
        <WinButton aria-label="关闭"><Cross color="#000" w={1} /></WinButton>
      </TitleBar>
      <MenuBar>{menus.map(m => <MenuItem key={m}>{m}</MenuItem>)}</MenuBar>
      <Toolbar>
        <Grip $start />
        {groups.map((g, i) => <React.Fragment key={i}><ToolGroup names={g} /><Separator /></React.Fragment>)}
        <HistoryBox>
          <HistoryButton aria-label="放弃"><Icon name="undo" size={12} /></HistoryButton><HistoryButton aria-label="放弃列表"><svg width="7" height="4"><path d="M0 0h7L3.500 4z" fill="#fff" /></svg></HistoryButton>
          <HistoryButton aria-label="重做"><Icon name="redo" size={12} /></HistoryButton><HistoryButton aria-label="重做列表"><svg width="7" height="4"><path d="M0 0h7L3.500 4z" fill="#fff" /></svg></HistoryButton>
        </HistoryBox>
        {groups2.map((g, i) => <React.Fragment key={i}><Separator /><ToolGroup names={g} /></React.Fragment>)}
        <Grip />
        {styles.map(([icon, value, sep]) => (
          <React.Fragment key={icon}>
            {sep > 0 && <Separator />}<ToolButton aria-label={icon}><Icon name={icon} /></ToolButton>
            <ComboBox name={icon} value={value} $w={100} $mono />
          </React.Fragment>
        ))}
      </Toolbar>
      <Toolbar>
        <Grip $start />
        <ToolButton $w={26} aria-label="图层特性"><Icon name="layerProps" /></ToolButton>
        <ComboBox name="图层" value="0" $w={299} $pad={5} $bright><Icon name="bulb" size={14} /><Icon name="sun" size={14} /><Icon name="vpFreeze" size={14} /><Icon name="unlock" size={14} /><Swatch /></ComboBox>
        <ToolGroup names={['layerPrev', 'layerBack', 'layerState']} />
        <Grip />
        <ComboBox name="颜色" value="随层" $w={155} $pad={5}><Swatch /></ComboBox><Separator />
        <ComboBox name="线型" value="随层" $w={169} $gap={1} $pad={5}><Stroke $w={62} /></ComboBox><Separator />
        <ComboBox name="线宽" value="随层" $w={122} $gap={1} $pad={5}><Stroke $w={36} /></ComboBox><Separator />
        <ComboBox name="打印样式" value="随层" $w={117} $pad={5} $bright />
      </Toolbar>

      <Main>
        <Workspace>
          <Upper>
            <SideBar><SideTools names={drawTools} /></SideBar>
            <Document>
              <TabStrip>
                <TabList aria-label="文档列表"><svg width="7" height="7"><path d="M0 0h7L3.500 7z" fill="#fff" /></svg></TabList>
                <DocTab><button><Icon name="dwg" />Drawing1.dwg</button></DocTab>
                <DocTab $on><button><Icon name="dwg" />Drawing2.dwg*</button><button aria-label="关闭文档"><Cross size={9} w={2} /></button></DocTab>
                <NewTab aria-label="新建"><Icon name="newFile" /></NewTab>
              </TabStrip>
              <Canvas>
                <Drawing /><Axes />
                <DocControls>
                  <button aria-label="最小化文档"><svg width="10" height="10"><path d="M0 9h10" stroke="#fff" strokeWidth="2" /></svg></button>
                  <button aria-label="还原文档"><svg width="10" height="10"><path d="M3 3V1h6v6H7M1 3.500h6v5.500H1z" fill="none" stroke="#fff" strokeWidth="1.500" /></svg></button>
                  <button aria-label="关闭绘图"><Cross size={8} w={2} /></button>
                </DocControls>
                <Prompt role="tooltip"><Mixed s={10}>{'选择直线、圆弧、圆或 <指定顶点>:'}</Mixed></Prompt>
              </Canvas>
              <TabStrip $low>
                <LayoutTab $w={14} aria-label="布局列表"><Caret up color="#fff" /></LayoutTab>
                {['M1 0v10M8 0v10L3 5z', 'M7 0v10L2 5z', 'M2 0v10l5-5z', 'M8 0v10M1 0v10l5-5z'].map(d => (
                  <LayoutTab key={d} $w={14} aria-label="切换布局"><svg width="9" height="10"><path d={d} fill="#a4a9b1" stroke="#a4a9b1" strokeWidth=".8" /></svg></LayoutTab>
                ))}
                <LayoutTab $w={47} $on>模型</LayoutTab><LayoutTab $w={51}>布局1</LayoutTab><LayoutTab $w={51}>布局2</LayoutTab><LayoutTab $w={30}>+</LayoutTab>
              </TabStrip>
            </Document>
            <SideBar><SideTools names={modifyTools} /><SideTools names={orderTools} /></SideBar>
          </Upper>
          <CommandPanel>
            <CommandGrip><Cross size={8} color="#7a818c" w={2} /></CommandGrip>
            <CommandBody>
              <CommandLog>
                <div>{log.map((l, i) => <p key={i}><Mixed>{l}</Mixed></p>)}</div>
                <Scroll $pad="7px 0 5px"><Chevron up /><Thumb $h={13} $m="auto 0 6px" /><Chevron /></Scroll>
              </CommandLog>
              <CommandInput><label htmlFor="command"><Mixed>{'选择直线、圆弧、圆或 <指定顶点>:'}</Mixed></label><input id="command" /></CommandInput>
            </CommandBody>
          </CommandPanel>
        </Workspace>

        <Panel $w={221}>
          <PanelHead $l={11}><h2>特性</h2><button aria-label="关闭特性"><Cross /></button></PanelHead>
          <Selector>
            <SelectBox><select aria-label="选择"><option>无选择</option></select><Caret color="#fff" /></SelectBox>
            {['pickAdd', 'select', 'quick'].map(n => <FlatButton key={n} aria-label={n}><Icon name={n} /></FlatButton>)}
          </Selector>
          <Sections>
            {properties.map(([title, rows, dim]) => (
              <PropTable key={title}>
                <caption><span>{title}<Caret color={C.text} /></span></caption>
                <tbody>{rows.map(([k, v]) => <tr key={k}><th scope="row">{k}</th><td><Value $dim={dim}>{v}</Value></td></tr>)}</tbody>
              </PropTable>
            ))}
          </Sections>
        </Panel>

        <Panel $w={276}>
          <PanelHead $l={18}><h2>计算器</h2><button aria-label="关闭计算器"><Cross /></button></PanelHead>
          <CalcTools>{['eraserGold', 'history', 'pasteCmd', 'getPoint', 'distance', 'angle', 'intersect', 'help'].map(n => <BoxButton key={n} aria-label={n}><Icon name={n} /></BoxButton>)}</CalcTools>
          <CalcScroll>
            <CalcBody>
              <TextArea aria-label="历史记录" /><Entry aria-label="输入" />
              <Caption $top={10}>数字键区<span>&lt;&lt;</span></Caption>
              <Keypad>{numKeys.map(k => <Key key={k}>{k}</Key>)}</Keypad>
              <Caption>科学<span>&lt;&lt;</span></Caption>
              <Keypad>{sciKeys.map(k => <Key key={k}>{k}</Key>)}</Keypad>
              <Caption>变量<span>&lt;&lt;</span></Caption>
              <VarTools>
                <BoxButton aria-label="新建变量"><VarSign>x<sup>+</sup></VarSign></BoxButton>
                <BoxButton $plain aria-label="编辑变量"><VarSign>x<sup>+</sup></VarSign></BoxButton>
                <BoxButton $plain aria-label="删除变量"><VarSign $c="#9a9fa6">x<sub>×</sub></VarSign></BoxButton>
                <BoxButton $plain aria-label="计算器"><Icon name="calcVar" /></BoxButton>
              </VarTools>
              <Tree>
                <TreeList>
                  <TreeRow $root><Expander aria-label="折叠" /><Icon name="folder" />变量样例</TreeRow>
                  {['Phi', 'dee', 'ille', 'mee', 'nee', 'rad'].map(v => <TreeRow key={v}><VarSign $key={v === 'Phi'}>{v === 'Phi' ? 'k' : 'x'}</VarSign>{v}</TreeRow>)}
                </TreeList>
                <Scroll><Chevron up /><Thumb $h={68} $m="6px 0 auto" /><Chevron /></Scroll>
              </Tree>
              <FieldLabel htmlFor="details">详细信息</FieldLabel>
              <TextArea id="details" $inset />
              <Caption $top={30}>单位转换<span>&lt;&lt;</span></Caption>
              <UnitRow><span><Icon name="quick" />单位类型</span><span>长度</span></UnitRow>
            </CalcBody>
            <Scroll $pad="7px 0"><Chevron up /><Thumb $h={105} $m="5px 0 auto" /></Scroll>
          </CalcScroll>
        </Panel>
      </Main>

      <StatusBar>
        <Coords>308.6279, 240.4702, 0.0000</Coords>
        {toggles.map(([n, on]) => <Toggle key={n} $on={on} aria-label={n} aria-pressed={!!on}><Icon name={n} /></Toggle>)}
        <StatusRight>
          <button><Icon name="units" />毫米</button><Caret color="#fff" />
          <button><Icon name="scaleA" /><Latin $s={10}>1:1</Latin></button><Caret color="#fff" />
          <button aria-label="注释可见性"><Icon name="scaleB" /></button><button aria-label="自动缩放"><Icon name="scaleC" /></button>
        </StatusRight>
      </StatusBar>

      <Tray>
        <svg viewBox="0 0 101 119" aria-hidden="true">
          <path d="M12 13h16v14H12z" fill="#fff" /><path d="M14 19h12v6H14z" fill="#ffa726" /><path d="M14 15.500h7" stroke="#333" strokeDasharray="1 1" />
          <circle cx="98" cy="18" r="6" fill="#31c96b" /><circle cx="96" cy="17" r="1" fill="#175b30" />
          <circle cx="19" cy="60" r="6" fill="#f0186e" /><path d="M15 57l4-4 4 1-3 3z" fill="#32b6d8" /><path d="M16 60h2v2h3v-3" stroke="#222" fill="none" />
          <path d="M53 54l6-2 6 2v6c0 4-3 6-6 7-3-1-6-3-6-7z" fill="#f39a2c" /><path d="M58 56l4 3-4 5-2-3z" fill="#fff" />
          <path d="M12 105L23 94v6z" fill="#e51717" /><path d="M20 99l7 6h-4z" fill="#24d436" />
        </svg>
        <Notice><p>激活 Windows</p><p>转到“设置”</p></Notice>
      </Tray>
      <Watermark>
        <svg width="52" height="48" viewBox="0 0 52 48" aria-hidden="true">
          <path d="M3 30C6 12 24 1 46 4 30 7 20 13 15 23 12 29 8 28 3 30z" fill="#1c6cb8" />
          <path d="M16 23c8-9 20-9 25-3-8-2-14 1-12 7 2 5 0 8-4 10 2-8-1-12-9-14z" fill="#2c86c8" />
          <path d="M3 42c17 1 27-6 28-16 5 6 2 15-8 18-8 2-15 1-20-2z" fill="#3c9b50" />
        </svg>
        <div><strong>极光下载站</strong><em>www.xz7.com</em></div>
      </Watermark>
    </Window>
  );
}
